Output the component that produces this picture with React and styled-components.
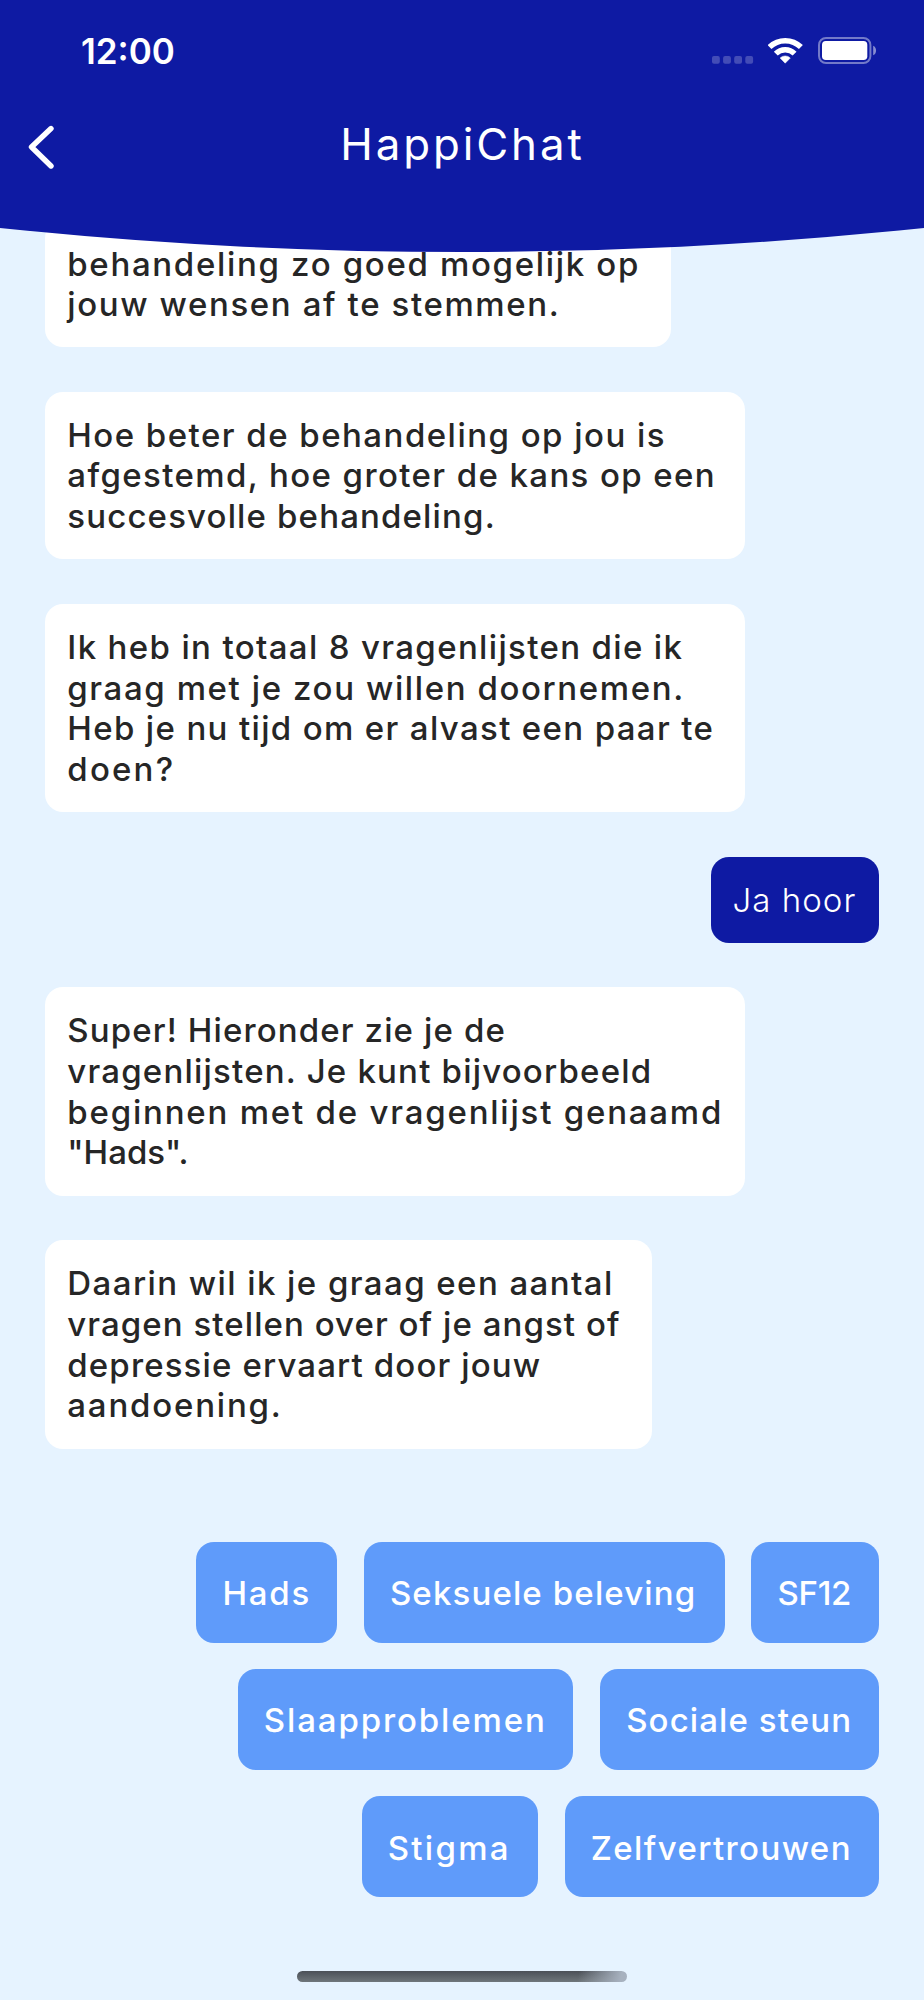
import React from 'react';
import styled, { createGlobalStyle } from 'styled-components';

const GlobalStyle = createGlobalStyle`
  * { box-sizing: border-box; }
  body { margin: 0; background: #e6f3ff; }
`;

const Screen = styled.main`
  width: 924px;
  height: 2000px;
  overflow: hidden;
  display: flex;
  flex-direction: column;
  background: #e6f3ff;
  font-family: Inter, "Liberation Sans", sans-serif;
`;

const Header = styled.header`
  position: relative;
  z-index: 1;
  flex: none;
  height: 252px;
  background: #0e1aa3;
  color: #fff;
  clip-path: circle(4459px at 50% -4207px);
`;

const StatusBar = styled.div`
  height: 101px;
  padding: 0 47px 0 81px;
  display: flex;
  align-items: center;
  justify-content: space-between;
`;

const Time = styled.time`
  font-size: 35px;
  font-weight: 600;
  line-height: 42px;
`;

const StatusIcons = styled.div`
  display: flex;
  align-items: center;
  gap: 14px;
`;

const NavBar = styled.nav`
  height: 92px;
  padding: 0 28px;
  display: grid;
  grid-template-columns: 40px 1fr 40px;
  align-items: center;
`;

const BackButton = styled.button`
  width: 40px;
  height: 48px;
  padding: 0;
  border: 0;
  background: none;
  color: inherit;
  display: flex;
  align-items: center;
`;

const Title = styled.h1`
  margin: 0;
  padding: 0 0 4px 1px;
  text-align: center;
  font-size: 43.8px;
  line-height: 52px;
  font-weight: 400;
  letter-spacing: 2.9px;
`;

const Messages = styled.section`
  flex: none;
  margin-top: -32px;
  padding: 0 45px;
  display: flex;
  flex-direction: column;
  gap: 44.6px;
`;

const Bubble = styled.div`
  width: ${(p) => p.$width}px;
  align-self: ${(p) => (p.$own ? 'flex-end' : 'flex-start')};
  padding: 22.8px 0 0 ${(p) => (p.$own ? 21.5 : 22.3)}px;
  height: ${(p) => p.$rows * 40.9 + 44.8}px;
  border-radius: 18px;
  background: ${(p) => (p.$own ? '#0e1aa3' : '#fff')};
  color: ${(p) => (p.$own ? '#fff' : '#262626')};
  font-size: 33px;
  font-weight: ${(p) => (p.$own ? 300 : 450)};
  line-height: 40.7px;
`;

const ScrolledBubble = styled(Bubble)`
  height: 127.4px;
  padding-bottom: 22.4px;
  display: flex;
  flex-direction: column;
  justify-content: flex-end;
`;

const Line = styled.span`
  display: block;
  white-space: nowrap;
  letter-spacing: ${(p) => p.$tracking}px;
`;

const Choices = styled.section`
  flex: none;
  padding: 93.2px 45px 0;
  display: flex;
  flex-direction: column;
  gap: 26.7px;
`;

const ChoiceRow = styled.div`
  display: flex;
  justify-content: flex-end;
  gap: 26.8px;
`;

const Choice = styled.button`
  width: ${(p) => p.$width}px;
  height: 100.6px;
  padding: 2.4px 0 0 26.2px;
  border: 0;
  border-radius: 18px;
  background: #5f9bfa;
  color: #fff;
  font-family: inherit;
  font-size: 33px;
  font-weight: 450;
  line-height: 40.9px;
  text-align: left;
  white-space: nowrap;
  letter-spacing: ${(p) => p.$tracking}px;
`;

const HomeIndicator = styled.div`
  flex: none;
  width: 330px;
  height: 11px;
  margin: auto auto 18px 297px;
  border-radius: 6px;
  background:
    linear-gradient(100deg, transparent 85%, #a7b1bf 98%),
    linear-gradient(#4b5057, #6f767b);
`;

const messages = [
  { width: 700, lines: [['Hoe beter de behandeling op jou is', 1.47], ['afgestemd, hoe groter de kans op een', 1.39], ['succesvolle behandeling.', 1.15]] },
  { width: 700, lines: [['Ik heb in totaal 8 vragenlijsten die ik', 1.35], ['graag met je zou willen doornemen.', 1.6], ['Heb je nu tijd om er alvast een paar te', 1.35], ['doen?', 2.2]] },
  { width: 168, own: true, lines: [['Ja hoor', 1.05]] },
  { width: 700, lines: [['Super! Hieronder zie je de', 1.13], ['vragenlijsten. Je kunt bijvoorbeeld', 1.2], ['beginnen met de vragenlijst genaamd', 1.79], ['"Hads".', 0]] },
  { width: 606.5, lines: [['Daarin wil ik je graag een aantal', 1.43], ['vragen stellen over of je angst of', 1.06], ['depressie ervaart door jouw', 1.14], ['aandoening.', 1.8]] },
];

const choices = [
  [['Hads', 140.7, 1.8], ['Seksuele beleving', 360.8, 1.14], ['SF12', 127.7, -0.32]],
  [['Slaapproblemen', 335.6, 1.88], ['Sociale steun', 279, 1.1]],
  [['Stigma', 176.2, 2.3], ['Zelfvertrouwen', 314.5, 1.4]],
];

function BackIcon() {
  return (
    <svg width="28" height="46" viewBox="0 0 28 46" fill="none">
      <path d="M23 4.5 3.5 23 23 42" stroke="currentColor" strokeWidth="5.4" strokeLinecap="round" strokeLinejoin="round" />
    </svg>
  );
}

function SignalDots() {
  return (
    <svg width="42" height="27" viewBox="0 0 42 27" fill="#fff" opacity="0.22">
      {[0, 11.1, 22.2, 33.3].map((x) => (
        <rect key={x} x={x} y="19" width="7.8" height="7.8" rx="2" />
      ))}
    </svg>
  );
}

function WifiIcon() {
  return (
    <svg width="36" height="27" viewBox="0 0 36 27" fill="none">
      <path d="M1.5 10.1a22.4 22.4 0 0 1 31.4 0" stroke="#fff" strokeWidth="5.6" />
      <path d="M7.8 16.6a13.3 13.3 0 0 1 18.8 0" stroke="#fff" strokeWidth="5.5" />
      <path d="M12.1 21a7.2 7.2 0 0 1 10.2 0L17.2 26.2Z" fill="#fff" stroke="#fff" strokeWidth=".5" strokeLinejoin="round" />
    </svg>
  );
}

function BatteryIcon() {
  return (
    <svg width="59" height="27" viewBox="0 0 59 27" fill="none">
      <rect x="1" y="1" width="51.4" height="25" rx="7" stroke="#fff" strokeOpacity=".42" strokeWidth="2" />
      <rect x="4" y="4" width="45.3" height="19" rx="3.8" fill="#fff" />
      <path d="M55.2 8.7c3.8 1.6 3.8 8 0 9.6Z" fill="#fff" fillOpacity=".5" />
    </svg>
  );
}

export default function App() {
  return (
    <Screen>
      <GlobalStyle />
      <Header>
        <StatusBar>
          <Time>12:00</Time>
          <StatusIcons>
            <SignalDots />
            <WifiIcon />
            <BatteryIcon />
          </StatusIcons>
        </StatusBar>
        <NavBar>
          <BackButton aria-label="Terug">
            <BackIcon />
          </BackButton>
          <Title>HappiChat</Title>
        </NavBar>
      </Header>
      <Messages>
        <ScrolledBubble $width={626} $rows={2}>
          <Line $tracking={1.67}>behandeling zo goed mogelijk op</Line>
          <Line $tracking={1.61}>jouw wensen af te stemmen.</Line>
        </ScrolledBubble>
        {messages.map((message) => (
          <Bubble
            key={message.lines[0][0]}
            $width={message.width}
            $rows={message.lines.length}
            $own={message.own}
          >
            {message.lines.map(([text, tracking]) => (
              <Line key={text} $tracking={tracking}>{text}</Line>
            ))}
          </Bubble>
        ))}
      </Messages>
      <Choices>
        {choices.map((row) => (
          <ChoiceRow key={row[0][0]}>
            {row.map(([label, width, tracking]) => (
              <Choice key={label} $width={width} $tracking={tracking}>{label}</Choice>
            ))}
          </ChoiceRow>
        ))}
      </Choices>
      <HomeIndicator />
    </Screen>
  );
}
